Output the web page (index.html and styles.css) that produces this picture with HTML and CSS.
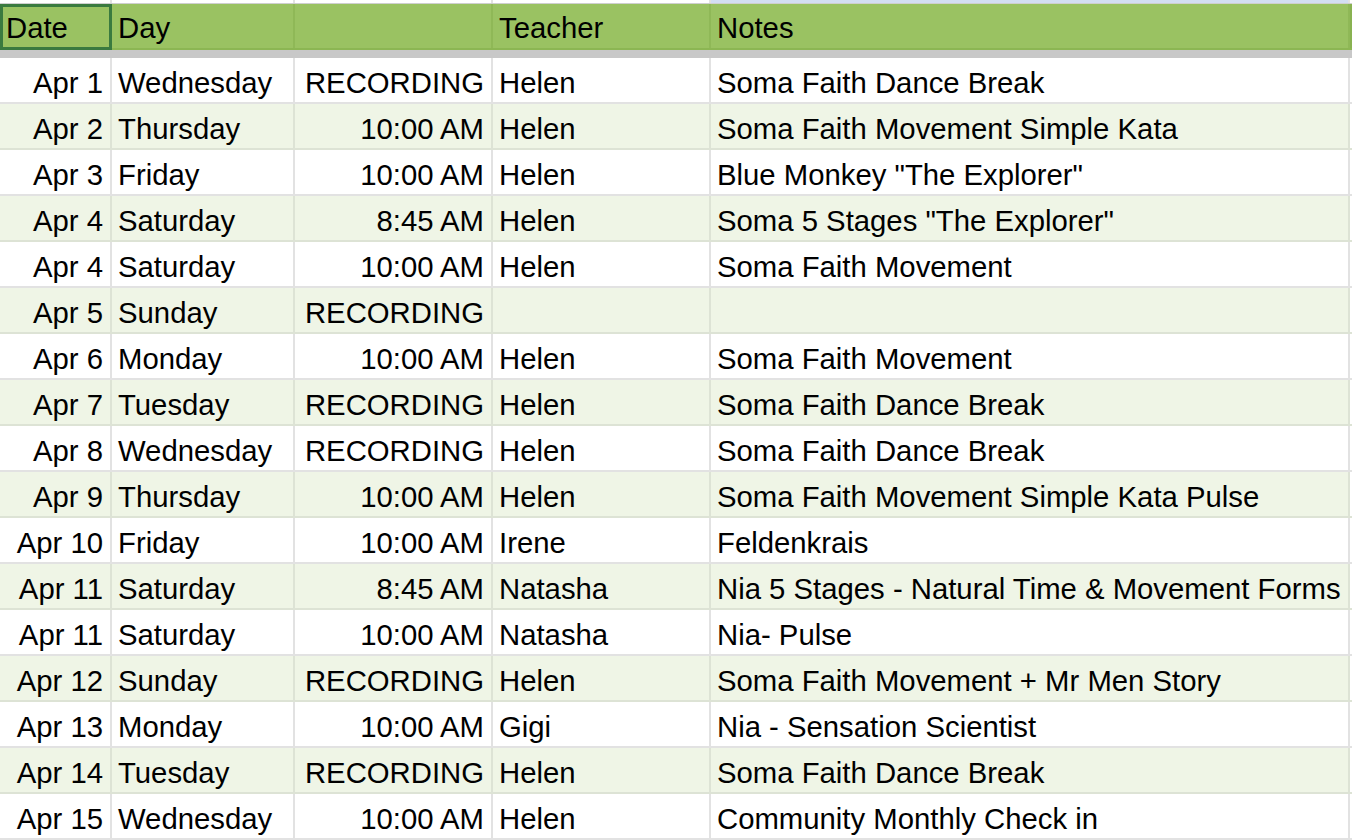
FILE: index.html
```html
<!DOCTYPE html>
<html>
<head>
<meta charset="utf-8">
<link rel="stylesheet" href="styles.css">
</head>
<body>
<div class="sheet">
  <div class="row top">
    <div class="cell"></div><div class="cell"></div><div class="cell"></div><div class="cell"></div><div class="cell sel-col"></div>
  </div>
  <div class="row head">
    <div class="cell active">Date</div>
    <div class="cell">Day</div>
    <div class="cell"></div>
    <div class="cell">Teacher</div>
    <div class="cell">Notes</div>
  </div>
  <div class="freeze"></div>
  <div class="row"><div class="cell r">Apr 1</div><div class="cell">Wednesday</div><div class="cell r">RECORDING</div><div class="cell">Helen</div><div class="cell">Soma Faith Dance Break</div></div>
  <div class="row alt"><div class="cell r">Apr 2</div><div class="cell">Thursday</div><div class="cell r">10:00 AM</div><div class="cell">Helen</div><div class="cell">Soma Faith Movement Simple Kata</div></div>
  <div class="row"><div class="cell r">Apr 3</div><div class="cell">Friday</div><div class="cell r">10:00 AM</div><div class="cell">Helen</div><div class="cell">Blue Monkey "The Explorer"</div></div>
  <div class="row alt"><div class="cell r">Apr 4</div><div class="cell">Saturday</div><div class="cell r">8:45 AM</div><div class="cell">Helen</div><div class="cell">Soma 5 Stages "The Explorer"</div></div>
  <div class="row"><div class="cell r">Apr 4</div><div class="cell">Saturday</div><div class="cell r">10:00 AM</div><div class="cell">Helen</div><div class="cell">Soma Faith Movement</div></div>
  <div class="row alt"><div class="cell r">Apr 5</div><div class="cell">Sunday</div><div class="cell r">RECORDING</div><div class="cell"></div><div class="cell"></div></div>
  <div class="row"><div class="cell r">Apr 6</div><div class="cell">Monday</div><div class="cell r">10:00 AM</div><div class="cell">Helen</div><div class="cell">Soma Faith Movement</div></div>
  <div class="row alt"><div class="cell r">Apr 7</div><div class="cell">Tuesday</div><div class="cell r">RECORDING</div><div class="cell">Helen</div><div class="cell">Soma Faith Dance Break</div></div>
  <div class="row"><div class="cell r">Apr 8</div><div class="cell">Wednesday</div><div class="cell r">RECORDING</div><div class="cell">Helen</div><div class="cell">Soma Faith Dance Break</div></div>
  <div class="row alt"><div class="cell r">Apr 9</div><div class="cell">Thursday</div><div class="cell r">10:00 AM</div><div class="cell">Helen</div><div class="cell">Soma Faith Movement Simple Kata Pulse</div></div>
  <div class="row"><div class="cell r">Apr 10</div><div class="cell">Friday</div><div class="cell r">10:00 AM</div><div class="cell">Irene</div><div class="cell">Feldenkrais</div></div>
  <div class="row alt"><div class="cell r">Apr 11</div><div class="cell">Saturday</div><div class="cell r">8:45 AM</div><div class="cell">Natasha</div><div class="cell">Nia 5 Stages - Natural Time &amp; Movement Forms</div></div>
  <div class="row"><div class="cell r">Apr 11</div><div class="cell">Saturday</div><div class="cell r">10:00 AM</div><div class="cell">Natasha</div><div class="cell">Nia- Pulse</div></div>
  <div class="row alt"><div class="cell r">Apr 12</div><div class="cell">Sunday</div><div class="cell r">RECORDING</div><div class="cell">Helen</div><div class="cell">Soma Faith Movement + Mr Men Story</div></div>
  <div class="row"><div class="cell r">Apr 13</div><div class="cell">Monday</div><div class="cell r">10:00 AM</div><div class="cell">Gigi</div><div class="cell">Nia - Sensation Scientist</div></div>
  <div class="row alt"><div class="cell r">Apr 14</div><div class="cell">Tuesday</div><div class="cell r">RECORDING</div><div class="cell">Helen</div><div class="cell">Soma Faith Dance Break</div></div>
  <div class="row"><div class="cell r">Apr 15</div><div class="cell">Wednesday</div><div class="cell r">10:00 AM</div><div class="cell">Helen</div><div class="cell">Community Monthly Check in</div></div>
</div>
</body>
</html>
```
FILE: styles.css
```css
html, body {
  margin: 0;
  padding: 0;
  background: #ffffff;
  overflow: hidden;
}
.sheet {
  width: 1352px;
  font-family: "Liberation Sans", Arial, sans-serif;
  font-size: 29.3px;
  color: #000;
}
.row {
  display: grid;
  grid-template-columns: 112px 183px 198px 218px 639px 2px;
  height: 46px;
  box-sizing: border-box;
  border-bottom: 2px solid #e2e2e2;
  background: #ffffff;
}
.row::after {
  content: "";
  background: #ffffff;
}
.row.alt {
  background: #eff5e6;
  border-bottom-color: #dde3d5;
}
.cell {
  box-sizing: border-box;
  border-right: 2px solid #e2e2e2;
  padding: 10px 7px 0 6px;
  line-height: 29px;
  white-space: nowrap;
  overflow: hidden;
}
.row.alt .cell {
  border-right-color: #dde3d5;
}
.cell.r {
  text-align: right;
}
.row.top {
  height: 4px;
  border-bottom: 1px solid #cfcfcf;
}
.row.top .cell {
  padding: 0;
}
.row.top .sel-col {
  background: #d3def3;
}
.row.head {
  height: 46px;
  background: #9ac262;
  border-bottom: 2px solid #8cb653;
}
.row.head::after {
  background: #89b251;
}
.row.head .cell {
  border-right-color: #8fb857;
  padding-top: 9px;
}
.row.head .cell.active {
  border: 3px solid #3a7a3f;
  margin-bottom: -2px;
  padding: 6px 0 0 3px;
}
.freeze {
  height: 8px;
  background: #c8c8c8;
}
```
